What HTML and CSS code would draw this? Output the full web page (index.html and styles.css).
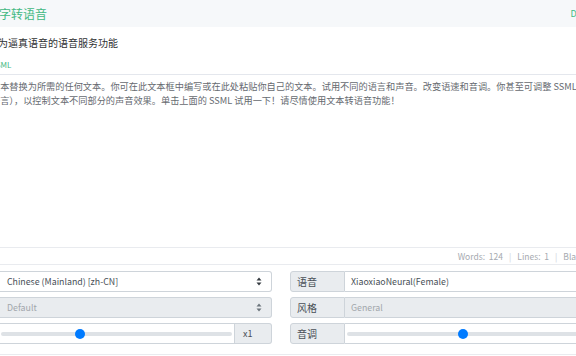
FILE: index.html
```html
<!DOCTYPE html>
<html lang="zh-CN">
<head>
<meta charset="utf-8">
<title>文字转语音</title>
<link rel="stylesheet" href="styles.css">
</head>
<body>
<div class="page">
  <header class="topbar">
    <span class="brand">文字转语音</span>
    <span class="nav">Docs</span>
  </header>
  <h1 class="title">换为逼真语音的语音服务功能</h1>
  <div class="tabs"><span class="tab">SSML</span></div>
  <div class="editor">
    <div class="text">
      <div class="line">文本替换为所需的任何文本。你可在此文本框中编写或在此处粘贴你自己的文本。试用不同的语言和声音。改变语速和音调。你甚至可调整 SSML</div>
      <div class="line">语言），以控制文本不同部分的声音效果。单击上面的 SSML 试用一下！请尽情使用文本转语音功能！</div>
    </div>
    <div class="status">
      <span class="stat">Words:&nbsp; 124</span><span class="sep">|</span>
      <span class="stat">Lines:&nbsp; 1</span><span class="sep">|</span>
      <span class="stat">Blank:&nbsp; 0</span>
    </div>
  </div>
  <div class="controls">
    <div class="group">
      <span class="addon">语言</span>
      <div class="select"><span>Chinese (Mainland) [zh-CN]</span><svg class="caret" width="6" height="9" viewBox="0 0 6 9"><path d="M3 0.5L5.5 3.5H0.5Z M3 8.5L5.5 5.5H0.5Z" fill="#343a40"/></svg></div>
    </div>
    <div class="group">
      <span class="addon">语音</span>
      <div class="field">XiaoxiaoNeural(Female)</div>
    </div>
    <div class="group">
      <span class="addon">角色</span>
      <div class="select disabled"><span>Default</span><svg class="caret" width="6" height="9" viewBox="0 0 6 9"><path d="M3 0.5L5.5 3.5H0.5Z M3 8.5L5.5 5.5H0.5Z" fill="#6c757d"/></svg></div>
    </div>
    <div class="group">
      <span class="addon">风格</span>
      <div class="field disabled">General</div>
    </div>
    <div class="group">
      <span class="addon">语速</span>
      <div class="range"><div class="track"><span class="thumb" style="left:34%"></span></div></div>
      <span class="addon suffix">x1</span>
    </div>
    <div class="group">
      <span class="addon">音调</span>
      <div class="range"><div class="track"><span class="thumb" style="left:43%"></span></div></div>
    </div>
  </div>
  <div class="bottom"></div>
</div>
</body>
</html>
```
FILE: styles.css
```css
* { box-sizing: border-box; }
html, body {
  margin: 0;
  padding: 0;
  background: #fff;
  overflow: hidden;
  width: 576px;
  height: 356px;
}
body {
  font-family: "Noto Sans CJK SC", "Noto Sans", sans-serif;
  color: #495057;
}
.page {
  width: 676px;
  margin-left: -57px;
}
.topbar {
  height: 27px;
  background: #f6f8fa;
  display: flex;
  align-items: center;
  justify-content: space-between;
  padding: 0 28px 0 44px;
}
.brand {
  font-size: 12px;
  color: #42b983;
  line-height: 1;
}
.nav {
  font-size: 9px;
  color: #42b983;
}
.title {
  margin: 8px 0 0;
  padding-left: 45px;
  font-size: 10px;
  line-height: 16px;
  font-weight: normal;
  color: #303133;
}
.tabs {
  height: 24px;
  padding: 8px 0 0 48px;
  border-bottom: 1px solid #e4e7ed;
}
.tab {
  font-size: 8px;
  line-height: 12px;
  color: #42b983;
  display: block;
}
.editor {
  display: flex;
  flex-direction: column;
}
.text {
  height: 172px;
  padding: 4px 0 0 48px;
  font-size: 9.2px;
  line-height: 14px;
  color: #666a70;
  overflow: hidden;
}
.line { white-space: nowrap; }
.status {
  height: 18px;
  border-top: 1px solid #e9ebef;
  border-bottom: 1px solid #e9ebef;
  display: flex;
  align-items: center;
  justify-content: flex-end;
  gap: 6px;
  padding-right: 22px;
  font-size: 8.5px;
  color: #a6aab0;
}
.sep { color: #cdd1d6; }
.controls {
  margin-top: 6px;
  display: grid;
  grid-template-columns: 329px 329px;
  column-gap: 18px;
  row-gap: 5px;
}
.group {
  display: flex;
  height: 21px;
}
.addon {
  width: 56px;
  flex: none;
  display: flex;
  align-items: center;
  padding-left: 6px;
  background: #e9ecef;
  border: 1px solid #ced4da;
  border-radius: 3px 0 0 3px;
  font-size: 10px;
  color: #495057;
}
.group:nth-child(even) .addon { width: 55px; }
.addon.suffix {
  width: 37px;
  padding-left: 8px;
  border-radius: 0 3px 3px 0;
  border-left: none;
  font-size: 9px;
}
.select, .field {
  flex: 1;
  display: flex;
  align-items: center;
  justify-content: space-between;
  border: 1px solid #ced4da;
  border-left: none;
  border-radius: 0 3px 3px 0;
  background: #fff;
  font-size: 8.8px;
  color: #495057;
}
.select { padding: 0 9px 0 8px; }
.field { padding-left: 6px; }
.disabled {
  background: #e9ecef;
  color: #a2a7ac;
}
.caret { display: block; }
.range {
  flex: 1;
  display: flex;
  align-items: center;
  padding: 0 2px 0 2px;
  border: 1px solid #ced4da;
  border-left: none;
  background: #fff;
}
.group:last-child .range { border-radius: 0 3px 3px 0; }
.track {
  position: relative;
  flex: 1;
  height: 4px;
  border-radius: 2px;
  background: #dee2e6;
}
.thumb {
  position: absolute;
  top: 50%;
  width: 10px;
  height: 10px;
  border-radius: 50%;
  background: #007bff;
  transform: translate(-50%, -50%);
}
.bottom {
  margin-top: 10px;
  border-top: 1px solid #e9ebef;
  height: 4px;
}
```
